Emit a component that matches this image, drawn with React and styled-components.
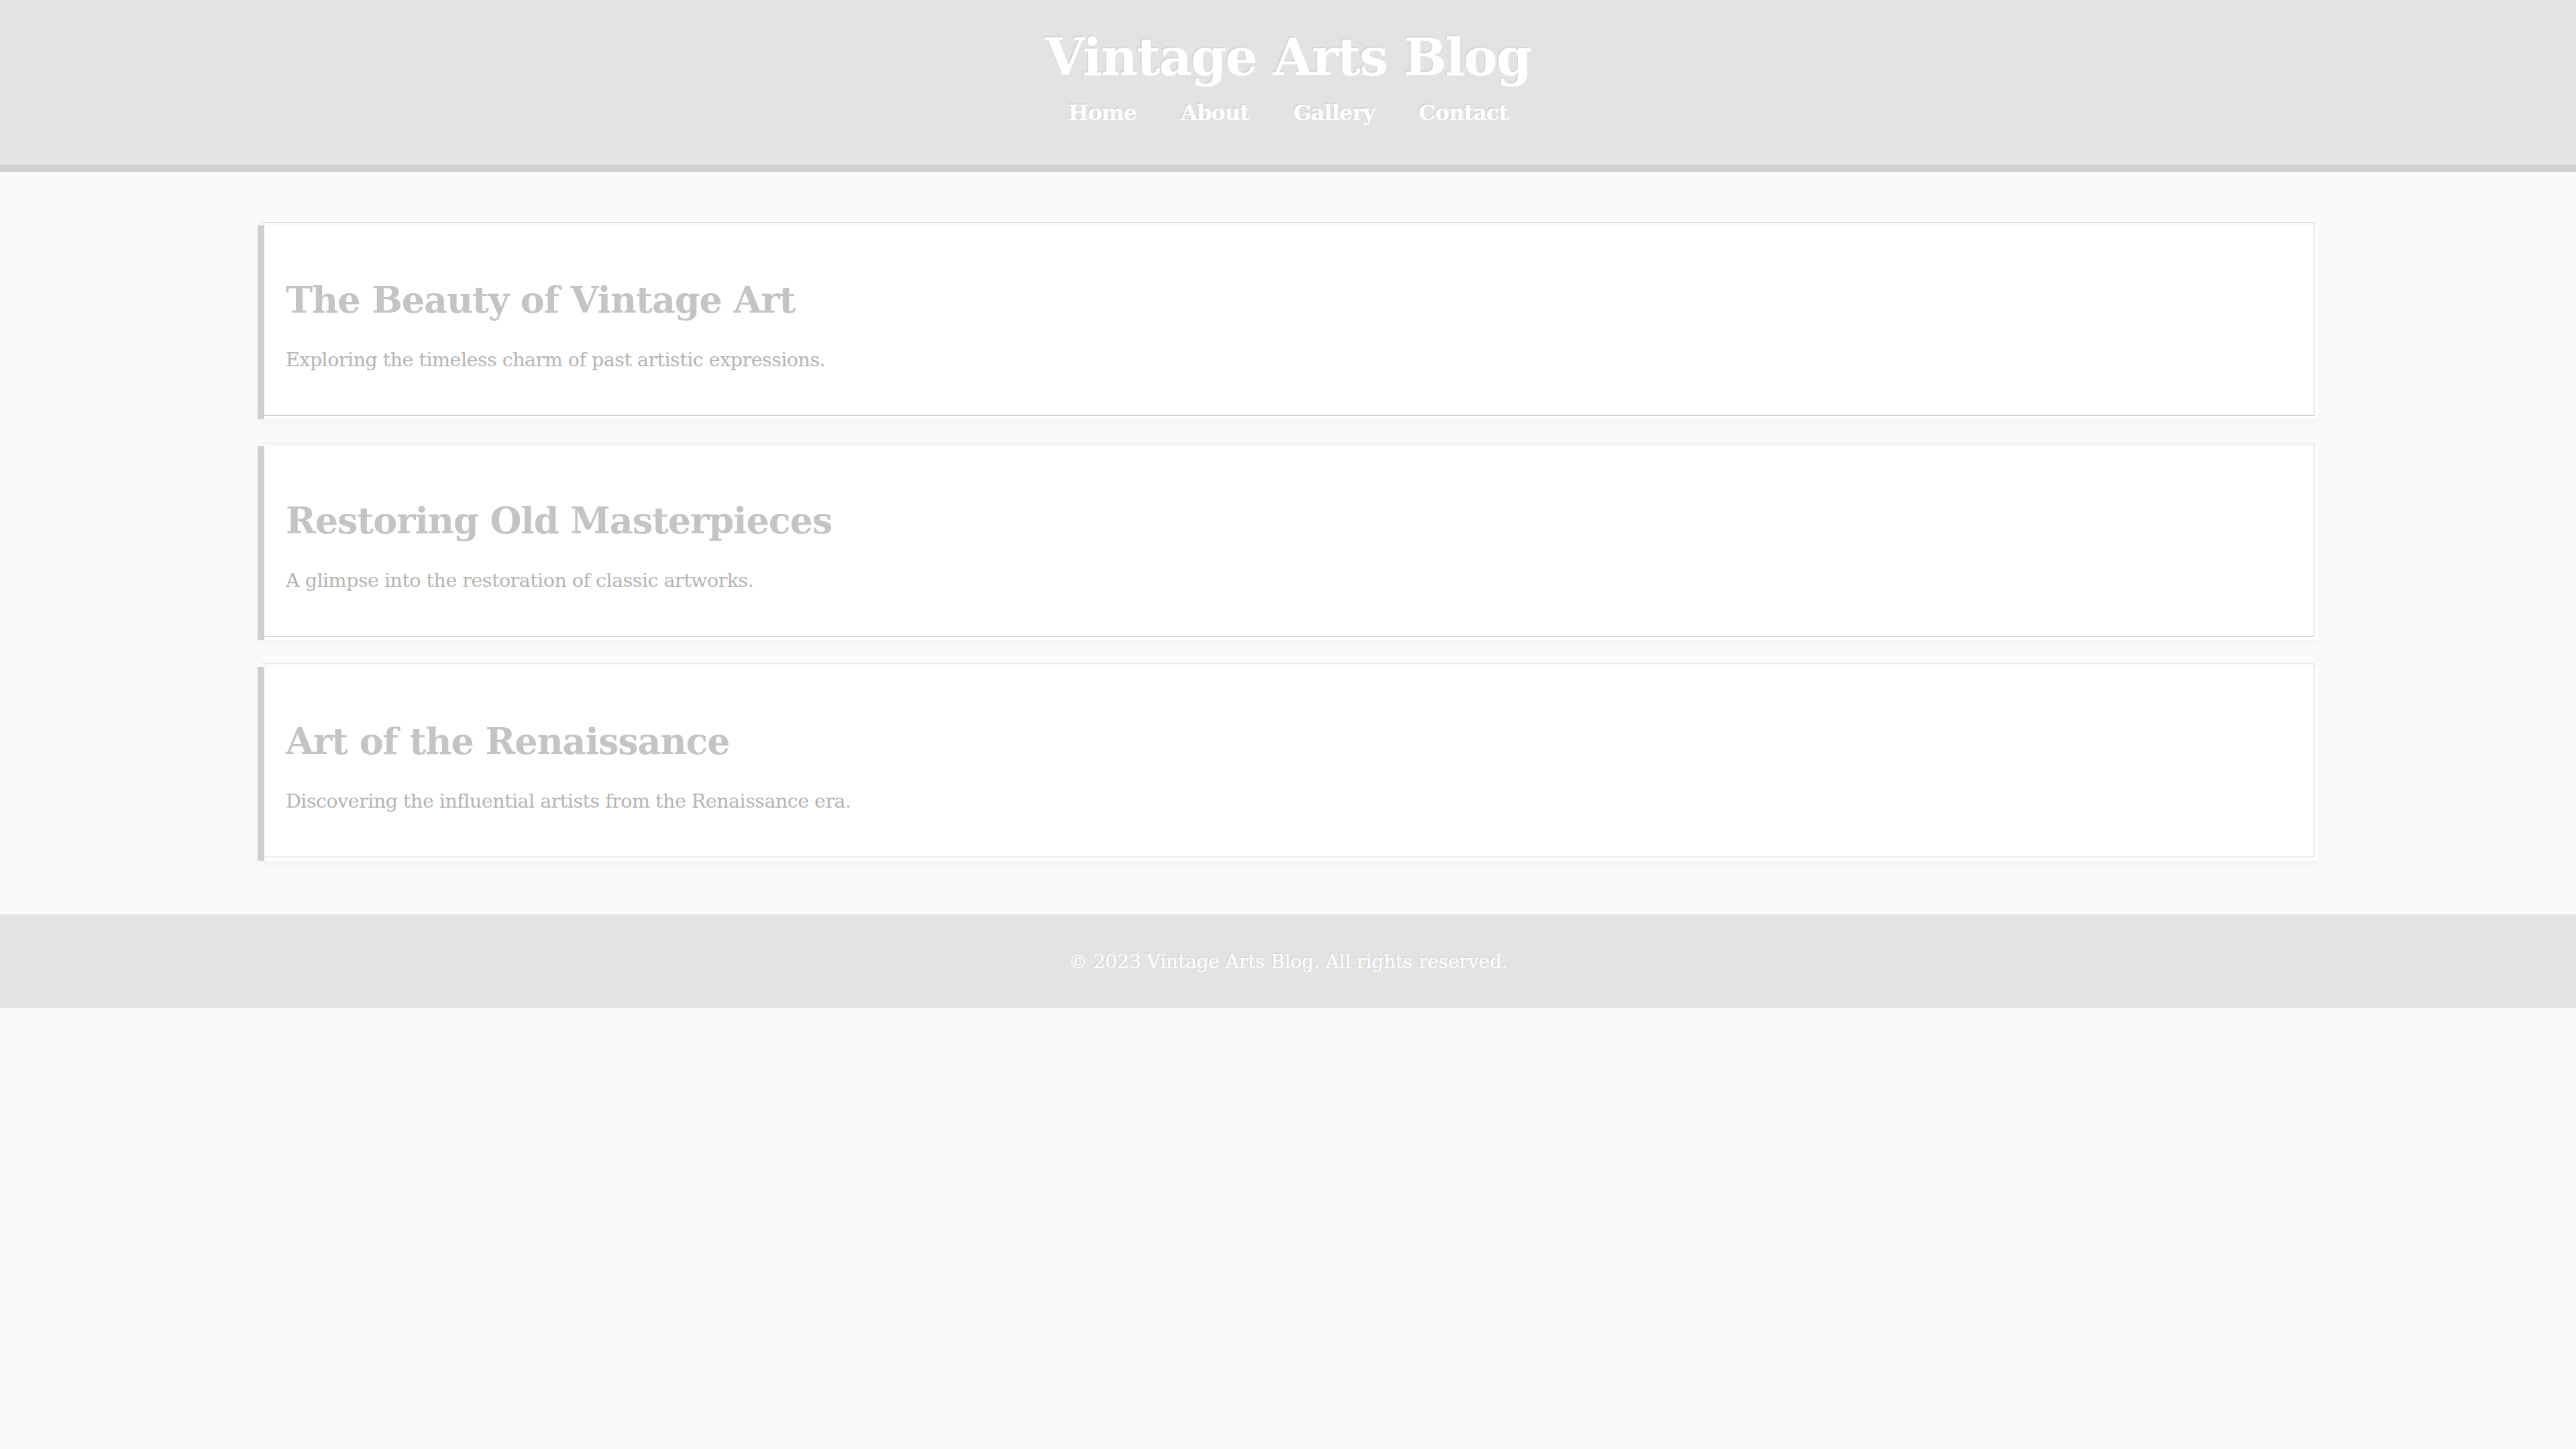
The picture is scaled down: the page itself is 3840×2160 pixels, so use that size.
import styled, { createGlobalStyle } from "styled-components"

const GlobalStyle = createGlobalStyle`
    html, body {
        margin: 0;
        padding: 0;
        background-color: #fafafa;
        font-family: Georgia, "DejaVu Serif", serif;
    }
`;

const Header = styled.header`
    background-color: #e3e3e3;
    border-bottom: 10px solid #d0d0d0;
    padding: 40px 0 58px;
    text-align: center;
`;

const Title = styled.h1`
    margin: 0;
    font-size: 76px;
    line-height: 91px;
    letter-spacing: -1.8px;
    font-weight: bold;
    color: #ffffff;
    text-shadow: -2px -2px 0 rgba(0, 0, 0, 0.06);
`;

const Nav = styled.nav`
    display: flex;
    justify-content: center;
    gap: 66px;
    margin-top: 17px;
`;

const NavLink = styled.a`
    font-size: 32px;
    line-height: 40px;
    letter-spacing: -1px;
    font-weight: bold;
    color: #ffffff;
    text-decoration: none;
    text-shadow: -2px -2px 0 rgba(0, 0, 0, 0.06);
`;

const Main = styled.main`
    display: flex;
    flex-direction: column;
    align-items: center;
    gap: 40px;
    padding: 80px 0;
`;

const Card = styled.article`
    position: relative;
    width: 80%;
    box-sizing: border-box;
    background-color: #ffffff;
    border-left: 10px solid #cfcfcf;
    padding: 32px;
    box-shadow: 0 5px 12px rgba(0, 0, 0, 0.03);

    // thin frame that sits a little above the card
    &::before {
        content: "";
        position: absolute;
        top: -5px;
        bottom: 5px;
        left: -4px;
        right: 6px;
        border-top: 1px solid #dddddd;
        border-bottom: 1px solid #c8c8c8;
        border-right: 1px solid #c8c8c8;
        pointer-events: none;
    }
`;

const CardTitle = styled.h2`
    margin: 47px 0 41px;
    font-size: 54px;
    line-height: 64px;
    letter-spacing: -1.1px;
    font-weight: bold;
    color: #c4c4c4;
`;

const CardText = styled.p`
    margin: 0 0 39px;
    font-size: 28.5px;
    line-height: 34px;
    letter-spacing: -0.5px;
    color: #b4b4b4;
`;

const Footer = styled.footer`
    background-color: #e3e3e3;
    height: 140px;
    display: flex;
    align-items: center;
    justify-content: center;
    font-size: 28px;
    letter-spacing: -0.1px;
    color: #ffffff;
    text-shadow: -2px -2px 0 rgba(0, 0, 0, 0.06);
`;

const posts = [
    {
        title: "The Beauty of Vintage Art",
        text: "Exploring the timeless charm of past artistic expressions.",
    },
    {
        title: "Restoring Old Masterpieces",
        text: "A glimpse into the restoration of classic artworks.",
    },
    {
        title: "Art of the Renaissance",
        text: "Discovering the influential artists from the Renaissance era.",
    },
];

function App() {
    return (
        <>
            <GlobalStyle />
            <Header>
                <Title>Vintage Arts Blog</Title>
                <Nav>
                    <NavLink href="#">Home</NavLink>
                    <NavLink href="#">About</NavLink>
                    <NavLink href="#">Gallery</NavLink>
                    <NavLink href="#">Contact</NavLink>
                </Nav>
            </Header>
            <Main>
                {posts.map((post) => (
                    <Card key={post.title}>
                        <CardTitle>{post.title}</CardTitle>
                        <CardText>{post.text}</CardText>
                    </Card>
                ))}
            </Main>
            <Footer>&copy; 2023 Vintage Arts Blog. All rights reserved.</Footer>
        </>
    );
}

export default App;
